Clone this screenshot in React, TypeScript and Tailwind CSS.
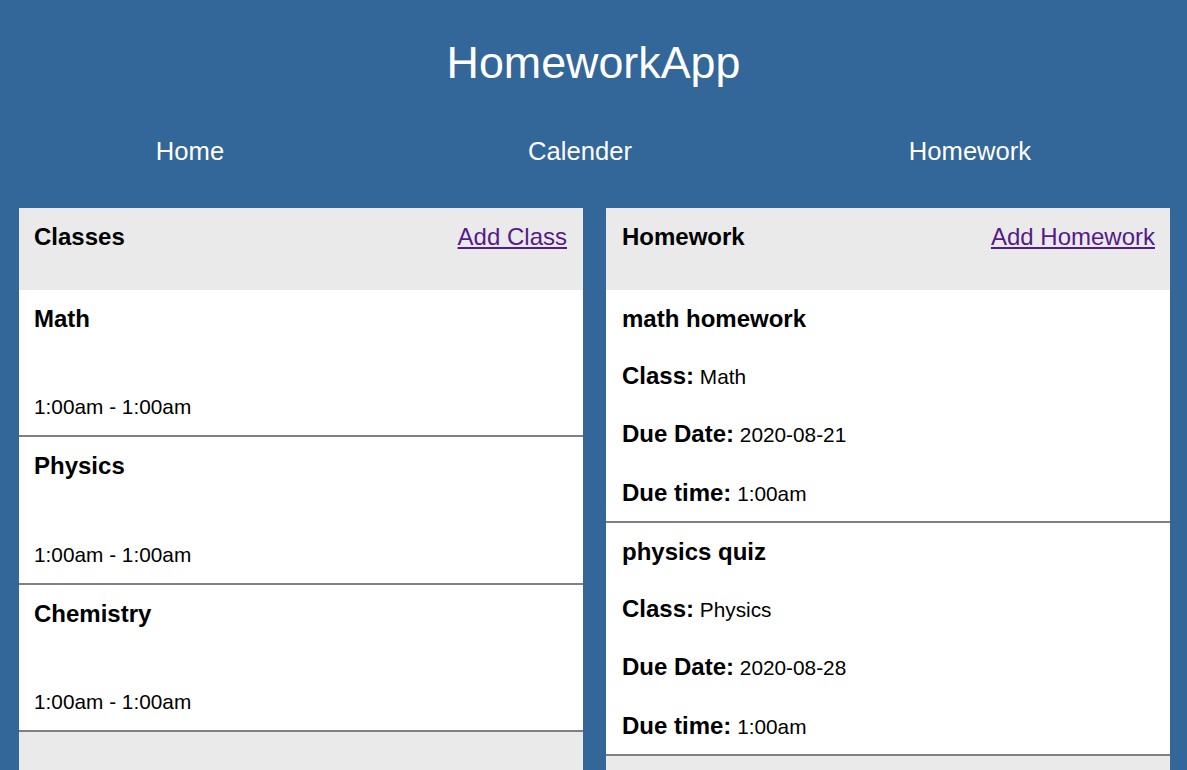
import React from 'react';

const classes = [
  { name: 'Math', start: '1:00am', end: '1:00am' },
  { name: 'Physics', start: '1:00am', end: '1:00am' },
  { name: 'Chemistry', start: '1:00am', end: '1:00am' },
];

const homework = [
  { title: 'math homework', className: 'Math', date: '2020-08-21', time: '1:00am' },
  { title: 'physics quiz', className: 'Physics', date: '2020-08-28', time: '1:00am' },
];

function PanelHeader({ title, action, pad }: { title: string; action: string; pad: string }) {
  return (
    <div className={`bg-[#eaeaea] h-[82px] pt-[15px] flex justify-between items-start ${pad}`}>
      <h2 className="text-[24px] leading-[28px] font-bold text-black">{title}</h2>
      <a href="#" className="text-[24px] leading-[28px] text-[#551a8b] underline">
        {action}
      </a>
    </div>
  );
}

export default function App() {
  return (
    <div
      className="bg-[#336699] min-h-[770px] w-full overflow-hidden"
      style={{ fontFamily: '"Liberation Sans", Arial, sans-serif' }}
    >
      {/* header */}
      <h1 className="pt-[36px] text-center text-white text-[44.8px] leading-[52px] font-normal">
        HomeworkApp
      </h1>

      <nav className="mt-[48px] w-[1170px] -ml-[5px] grid grid-cols-3">
        {['Home', 'Calender', 'Homework'].map((item) => (
          <a key={item} href="#" className="text-center text-white text-[25.6px] leading-[30px]">
            {item}
          </a>
        ))}
      </nav>

      <div className="mt-[42px] pl-[19px] flex gap-[23px] items-start">
        {/* classes */}
        <section className="w-[564px] bg-white">
          <PanelHeader title="Classes" action="Add Class" pad="pl-[15px] pr-[16px]" />
          {classes.map((c) => (
            <div
              key={c.name}
              className="h-[147.33px] border-b-2 border-[#808080] px-[15px] pt-[15px] pb-[16px] flex flex-col justify-between"
            >
              <h3 className="text-[24px] leading-[28px] font-bold text-black">{c.name}</h3>
              <p className="text-[20.8px] leading-[24px] text-black">
                {c.start} - {c.end}
              </p>
            </div>
          ))}
          <div className="bg-[#eaeaea] h-[60px]" />
        </section>

        {/* homework */}
        <section className="w-[564px] bg-white">
          <PanelHeader title="Homework" action="Add Homework" pad="pl-[16px] pr-[15px]" />
          {homework.map((h) => (
            <div
              key={h.title}
              className="h-[233px] border-b-2 border-[#808080] pl-[16px] pr-[15px] pt-[15px] flex flex-col gap-[29.6px]"
            >
              <h3 className="text-[24px] leading-[27.6px] font-bold text-black">{h.title}</h3>
              <p className="text-[20.8px] leading-[27.6px] text-black">
                <b className="text-[24px]">Class:</b> {h.className}
              </p>
              <p className="text-[20.8px] leading-[27.6px] text-black">
                <b className="text-[24px]">Due Date:</b> {h.date}
              </p>
              <p className="text-[20.8px] leading-[27.6px] text-black">
                <b className="text-[24px]">Due time:</b> {h.time}
              </p>
            </div>
          ))}
          <div className="bg-[#eaeaea] h-[60px]" />
        </section>
      </div>
    </div>
  );
}
